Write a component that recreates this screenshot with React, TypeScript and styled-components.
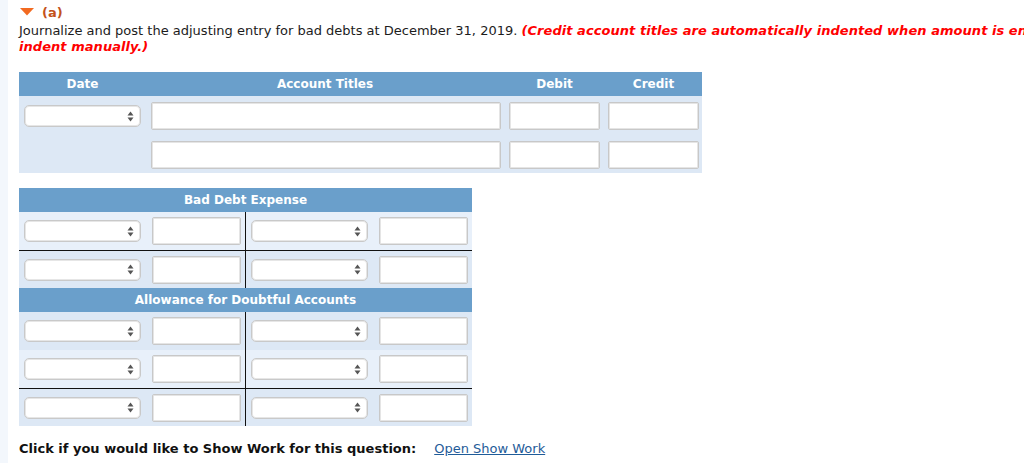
import React from 'react';
import styled, { createGlobalStyle } from 'styled-components';

const GlobalStyle = createGlobalStyle`
  html, body {
    margin: 0;
    padding: 0;
    background: #fff;
    overflow: hidden;
  }
  body {
    font-family: "DejaVu Sans", Verdana, sans-serif;
    color: #1c1c1c;
  }
`;

const Page = styled.div`
  box-sizing: border-box;
  min-height: 463px;
  border-left: 8px solid #f3f7fc;
  padding: 4px 0 0 11px;
`;

const Heading = styled.div`
  display: flex;
  align-items: center;
  gap: 8px;
  height: 16px;
  padding-left: 1px;
  font-size: 13px;
  font-weight: bold;
  color: #c4521a;
`;

const Prompt = styled.div`
  margin-top: 3px;
  font-size: 13px;
  line-height: 16px;
  white-space: nowrap;
`;

const Note = styled.span`
  color: #f00;
  font-weight: bold;
  font-style: italic;
  letter-spacing: 0.05px;
`;

const Journal = styled.div`
  width: 683px;
  margin-top: 17px;
  background: #dde8f5;
`;

const JGrid = styled.div`
  display: grid;
  grid-template-columns: 117px 352px 91px 91px;
  column-gap: 8px;
  padding: 0 3px 0 5px;
  align-items: center;
`;

const JHead = styled(JGrid)`
  height: 24px;
  background: #6a9fcb;
  color: #fff;
  font-size: 12px;
  font-weight: bold;
  text-align: center;
`;

const JBody = styled.div`
  display: flex;
  flex-direction: column;
  gap: 11px;
  padding: 6px 0 4px;
`;

const TextBox = styled.div<{ $shift?: number }>`
  box-sizing: border-box;
  height: 28px;
  margin-left: ${p => p.$shift ?? 0}px;
  background: #fff;
  border: 1px solid #c8c8c8;
  border-radius: 2px;
  box-shadow: inset 0 0 0 1px #e5e5e5;
`;

const SelectBox = styled.div`
  box-sizing: border-box;
  height: 22px;
  display: flex;
  align-items: center;
  justify-content: flex-end;
  padding-right: 6px;
  background: #fff;
  border: 1px solid #c9c9c9;
  border-radius: 5px;
  box-shadow: inset 0 0 0 1px #e6e6e6;
`;

const TAccount = styled.div`
  width: 453px;
  margin-top: 15px;
`;

const THead = styled.div`
  height: 24px;
  line-height: 24px;
  background: #6a9fcb;
  color: #fff;
  font-size: 12px;
  font-weight: bold;
  text-align: center;
`;

const TRow = styled.div<{ $light?: boolean; $total?: boolean }>`
  box-sizing: border-box;
  height: 38px;
  display: grid;
  grid-template-columns: 226px 1px 226px;
  background: ${p => (p.$light ? '#e8f0fa' : '#dde8f5')};
  border-top: ${p => (p.$total ? '1px solid #111' : 'none')};
`;

const Side = styled.div`
  display: grid;
  grid-template-columns: 117px 1fr;
  column-gap: 11px;
  align-items: center;
  padding: 0 4px 0 5px;
`;

const Divider = styled.div`
  background: #111;
`;

const Footer = styled.div`
  display: flex;
  gap: 18px;
  margin-top: 15px;
  font-size: 13px;
  line-height: 16px;
`;

const FooterLabel = styled.span`
  font-weight: bold;
  color: #111;
`;

const WorkLink = styled.a`
  color: #1f5c99;
  text-decoration: underline;
`;

function Caret() {
  return (
    <svg width="14" height="8" viewBox="0 0 14 8">
      <polygon points="0,0 14,0 7,7.5" fill="#f26a21" />
    </svg>
  );
}

function Select() {
  return (
    <SelectBox>
      <svg width="7" height="11" viewBox="0 0 7 11">
        <polygon points="3.5,0.5 6.5,4.5 0.5,4.5" fill="#555" />
        <polygon points="0.5,6.5 6.5,6.5 3.5,10.5" fill="#555" />
      </svg>
    </SelectBox>
  );
}

function TSide() {
  return (
    <Side>
      <Select />
      <TextBox />
    </Side>
  );
}

function TLine({ light, total }: { light?: boolean; total?: boolean }) {
  return (
    <TRow $light={light} $total={total}>
      <TSide />
      <Divider />
      <TSide />
    </TRow>
  );
}

export default function App() {
  return (
    <>
      <GlobalStyle />
      <Page>
        <Heading>
          <Caret />
          <span>(a)</span>
        </Heading>
        <Prompt>
          Journalize and post the adjusting entry for bad debts at December 31, 2019.{' '}
          <Note>(Credit account titles are automatically indented when amount is entered. Do not</Note>
          <br />
          <Note>indent manually.)</Note>
        </Prompt>

        <Journal>
          <JHead>
            <span>Date</span>
            <span>Account Titles</span>
            <span>Debit</span>
            <span>Credit</span>
          </JHead>
          <JBody>
            <JGrid>
              <Select />
              <TextBox $shift={2} />
              <TextBox />
              <TextBox />
            </JGrid>
            <JGrid>
              <span />
              <TextBox $shift={2} />
              <TextBox />
              <TextBox />
            </JGrid>
          </JBody>
        </Journal>

        <TAccount>
          <THead>Bad Debt Expense</THead>
          <TLine light />
          <TLine total />
          <THead>Allowance for Doubtful Accounts</THead>
          <TLine />
          <TLine light />
          <TLine total />
        </TAccount>

        <Footer>
          <FooterLabel>Click if you would like to Show Work for this question:</FooterLabel>
          <WorkLink href="#">Open Show Work</WorkLink>
        </Footer>
      </Page>
    </>
  );
}
